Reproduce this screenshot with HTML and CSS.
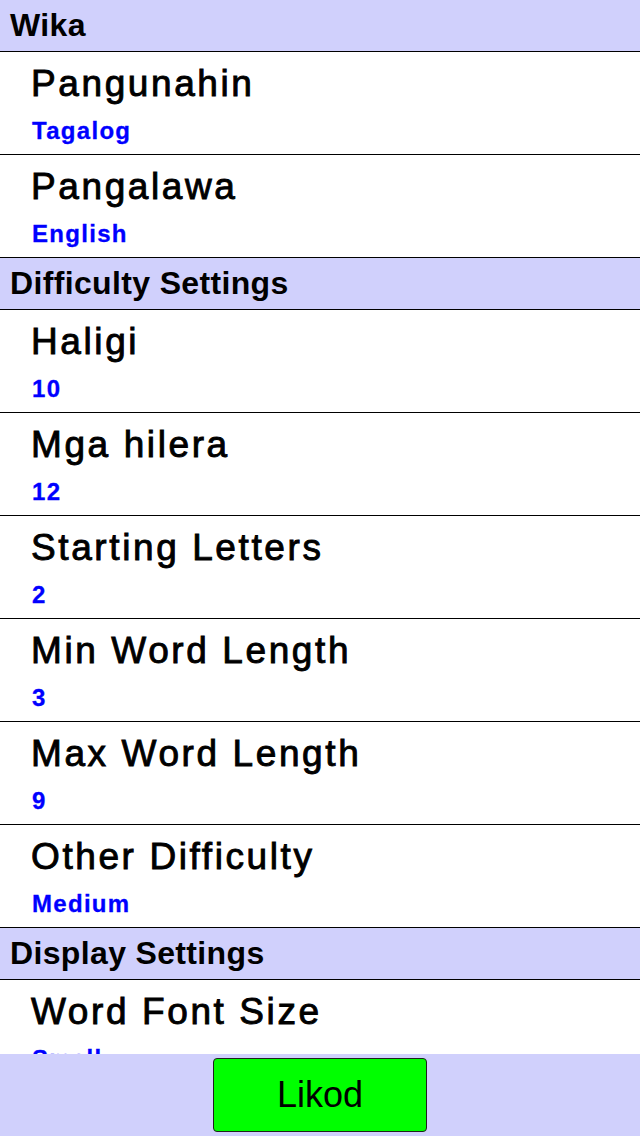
FILE: index.html
```html
<!DOCTYPE html>
<html>
<head>
<meta charset="utf-8">
<link rel="stylesheet" href="styles.css">
</head>
<body>
<div class="page">
  <div class="list">
    <div class="section">Wika</div>
    <div class="row"><div class="title">Pangunahin</div><div class="value">Tagalog</div></div>
    <div class="row"><div class="title">Pangalawa</div><div class="value">English</div></div>
    <div class="section">Difficulty Settings</div>
    <div class="row"><div class="title">Haligi</div><div class="value">10</div></div>
    <div class="row"><div class="title">Mga hilera</div><div class="value">12</div></div>
    <div class="row"><div class="title">Starting Letters</div><div class="value">2</div></div>
    <div class="row"><div class="title">Min Word Length</div><div class="value">3</div></div>
    <div class="row"><div class="title">Max Word Length</div><div class="value">9</div></div>
    <div class="row"><div class="title">Other Difficulty</div><div class="value">Medium</div></div>
    <div class="section">Display Settings</div>
    <div class="row"><div class="title">Word Font Size</div><div class="value">Small</div></div>
    <div class="row"><div class="title">Letter Font Size</div><div class="value">Medium</div></div>
  </div>
  <div class="footer">
    <button class="back">Likod</button>
  </div>
</div>
</body>
</html>
```

FILE: styles.css
```css
html, body {
  margin: 0;
  padding: 0;
  background: #ffffff;
}
body {
  font-family: "Liberation Sans", Arial, sans-serif;
  color: #000000;
}
.page {
  display: flex;
  flex-direction: column;
  width: 640px;
  height: 1136px;
}
.list {
  flex: 1;
  overflow: hidden;
}
.section {
  background: #d0d0fc;
  height: 51px;
  line-height: 51px;
  font-size: 32px;
  font-weight: bold;
  padding-left: 10px;
  border-bottom: 1px solid #000000;
  letter-spacing: 0.35px;
}
.row {
  padding: 10px 0 9px 31px;
  border-bottom: 1px solid #000000;
}
.title {
  font-size: 37px;
  line-height: 44px;
  letter-spacing: 2.6px;
  -webkit-text-stroke: 0.9px #000000;
}
.value {
  margin-top: 11px;
  padding-left: 1px;
  font-size: 24px;
  line-height: 28px;
  font-weight: bold;
  color: #0000ff;
  letter-spacing: 1.3px;
  -webkit-text-stroke: 0.3px #0000ff;
}
.footer {
  height: 82px;
  flex: none;
  background: #d0d0fc;
  display: flex;
  justify-content: center;
  align-items: center;
}
.back {
  width: 214px;
  height: 74px;
  background: #00ff00;
  border: 1px solid #202020;
  border-radius: 4px;
  font-family: "Liberation Sans", Arial, sans-serif;
  font-size: 36px;
  color: #000000;
  padding: 0;
}
```
